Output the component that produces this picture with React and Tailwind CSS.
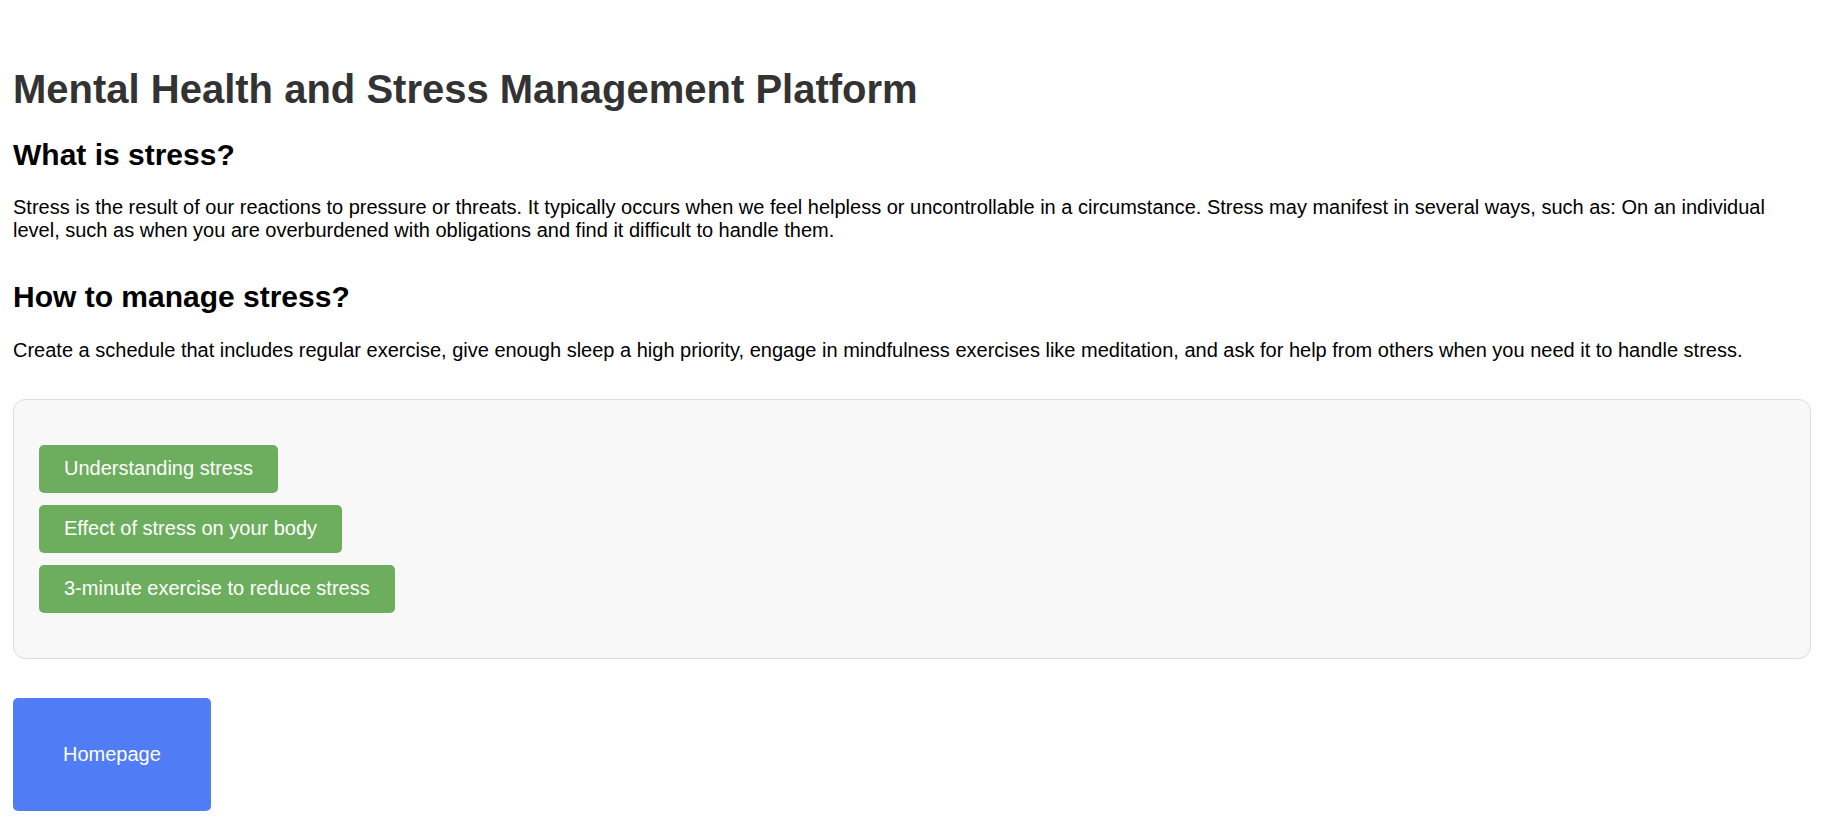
import React from 'react';

const videos = [
    'Understanding stress',
    'Effect of stress on your body',
    '3-minute exercise to reduce stress',
];

const App = () => {
    return (
        <div className="min-h-screen bg-white pl-[13px] pr-[26px] pt-[66px] pb-[14px] font-['Liberation_Sans',Arial,sans-serif] text-black">
            <h1 className="text-[40px] leading-[46px] font-bold text-[#333333] mb-[26px]">
                Mental Health and Stress Management Platform
            </h1>

            <h2 className="text-[30px] leading-[34.5px] font-bold mb-[23px]">What is stress?</h2>
            <p className="text-[20px] leading-[23px] mb-[38px]">
                Stress is the result of our reactions to pressure or threats. It typically occurs when we feel helpless or uncontrollable in a circumstance. Stress may manifest in several ways, such as: On an individual level, such as when you are overburdened with obligations and find it difficult to handle them.
            </p>

            <h2 className="text-[30px] leading-[34.5px] font-bold mb-[24.5px]">How to manage stress?</h2>
            <p className="text-[20px] leading-[23px] mb-[37px]">
                Create a schedule that includes regular exercise, give enough sleep a high priority, engage in mindfulness exercises like meditation, and ask for help from others when you need it to handle stress.
            </p>

            {/* Video list */}
            <div className="bg-[#f8f8f8] border border-[#dddddd] rounded-[12px] p-[25px]">
                <div className="flex flex-col items-start gap-[12px] my-[20px]">
                    {videos.map((v) => (
                        <button
                            key={v}
                            className="bg-[#6dad5e] text-white text-[20px] leading-[23px] px-[25px] py-[12.5px] rounded-[5px]"
                        >
                            {v}
                        </button>
                    ))}
                </div>
            </div>

            <button className="mt-[39px] bg-[#507cf6] text-white text-[20px] leading-[23px] px-[50px] py-[45px] rounded-[5px]">
                Homepage
            </button>
        </div>
    );
};

export default App;
